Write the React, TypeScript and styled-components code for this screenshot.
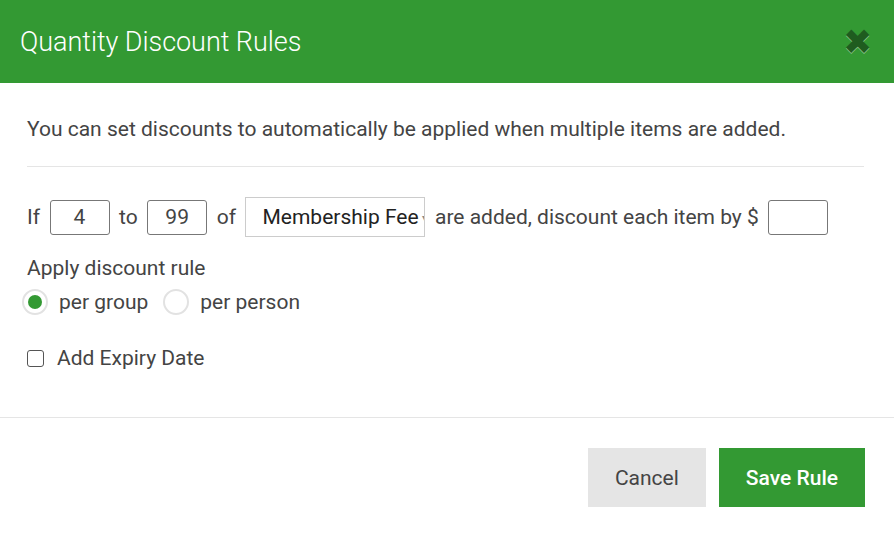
import React, { useState } from 'react';
import styled, { createGlobalStyle } from 'styled-components';

const GlobalStyle = createGlobalStyle`
  html, body {
    margin: 0;
    padding: 0;
    background: #fff;
  }
  * {
    box-sizing: border-box;
  }
`;

const App = () => {
  const [mode, setMode] = useState('group');
  const [expiry, setExpiry] = useState(false);

  return (
    <Modal>
      <GlobalStyle />
      <Header>
        <Title>Quantity Discount Rules</Title>
        <CloseButton aria-label='close'>✖</CloseButton>
      </Header>
      <Body>
        <Intro>You can set discounts to automatically be applied when multiple items are added.</Intro>
        <RuleRow>
          <Word>If</Word>
          <SmallInput defaultValue='4' />
          <Word>to</Word>
          <SmallInput defaultValue='99' />
          <Word>of</Word>
          <Select>
            <span>Membership Fee</span>
            <Caret>▾</Caret>
          </Select>
          <Word>are added, discount each item by $</Word>
          <SmallInput defaultValue='' />
        </RuleRow>
        <Label>Apply discount rule</Label>
        <RadioRow>
          <RadioOption onClick={() => setMode('group')}>
            <RadioCircle $checked={mode === 'group'} />
            <span>per group</span>
          </RadioOption>
          <RadioOption onClick={() => setMode('person')}>
            <RadioCircle $checked={mode === 'person'} />
            <span>per person</span>
          </RadioOption>
        </RadioRow>
        <CheckRow onClick={() => setExpiry(!expiry)}>
          <CheckBox $checked={expiry} />
          <span>Add Expiry Date</span>
        </CheckRow>
      </Body>
      <Footer>
        <Button>Cancel</Button>
        <Button $primary>Save Rule</Button>
      </Footer>
    </Modal>
  );
};

const Modal = styled.div`
  width: 894px;
  height: 535px;
  background: #fff;
  font-family: Roboto, 'Liberation Sans', sans-serif;
  color: #444;
  display: flex;
  flex-direction: column;
`;

const Header = styled.div`
  height: 83px;
  background: #339933;
  display: flex;
  align-items: center;
  justify-content: space-between;
  padding: 0 22px 0 20px;
`;

const Title = styled.h1`
  margin: 0;
  color: #fff;
  font-size: 27px;
  font-weight: 300;
  letter-spacing: -0.05px;
`;

const CloseButton = styled.button`
  border: none;
  background: transparent;
  padding: 0;
  color: #1f5c1f;
  font-size: 35px;
  line-height: 1;
  cursor: pointer;
  text-shadow: 0 1px 0 rgba(255, 255, 255, 0.45);
`;

const Body = styled.div`
  padding: 32px 30px 0 27px;
  display: flex;
  flex-direction: column;
  height: 335px;
  border-bottom: 1px solid #e5e5e5;
`;

const Intro = styled.p`
  margin: 0;
  font-size: 21px;
  line-height: 28px;
  padding-bottom: 23px;
  border-bottom: 1px solid #e5e5e5;
`;

const RuleRow = styled.div`
  display: flex;
  align-items: center;
  gap: 9.5px;
  margin-top: 30px;
`;

const Word = styled.span`
  font-size: 21px;
  line-height: 28px;
`;

const SmallInput = styled.input`
  width: 60px;
  height: 35px;
  border: 1px solid #777;
  border-radius: 3px;
  text-align: center;
  font-family: inherit;
  font-size: 21px;
  color: #444;
  padding: 0;
  outline: none;
`;

const Select = styled.div`
  flex: 0 0 180px;
  width: 180px;
  height: 40px;
  border: 1px solid #ccc;
  display: flex;
  align-items: center;
  padding-left: 16px;
  font-size: 21px;
  color: #222;
  overflow: hidden;
  white-space: nowrap;
`;

const Caret = styled.span`
  font-size: 10px;
  color: #888;
  margin-left: 3px;
`;

const Label = styled.div`
  margin-top: 17px;
  font-size: 21px;
  line-height: 28px;
`;

const RadioRow = styled.div`
  display: flex;
  align-items: center;
  gap: 15px;
  margin-top: 6px;
  margin-left: -5px;
`;

const RadioOption = styled.label`
  display: flex;
  align-items: center;
  gap: 11px;
  font-size: 21px;
  line-height: 28px;
  cursor: pointer;
`;

const RadioCircle = styled.span<{ $checked: boolean }>`
  width: 26px;
  height: 26px;
  border-radius: 50%;
  border: 2px solid #e2e2e2;
  background: #fff;
  display: flex;
  align-items: center;
  justify-content: center;
  &::after {
    content: '';
    width: 14px;
    height: 14px;
    border-radius: 50%;
    background: ${(p) => (p.$checked ? '#339933' : 'transparent')};
  }
`;

const CheckRow = styled.label`
  display: flex;
  align-items: center;
  gap: 13px;
  margin-top: 28px;
  font-size: 21px;
  line-height: 28px;
  cursor: pointer;
`;

const CheckBox = styled.span<{ $checked: boolean }>`
  width: 17px;
  height: 17px;
  border: 1.5px solid #555;
  border-radius: 3px;
  background: ${(p) => (p.$checked ? '#339933' : '#fff')};
`;

const Footer = styled.div`
  display: flex;
  justify-content: flex-end;
  gap: 13px;
  padding: 30px 29px 0 0;
`;

const Button = styled.button<{ $primary?: boolean }>`
  height: 59px;
  border: none;
  padding: 0 27px;
  font-family: inherit;
  font-size: 21px;
  font-weight: ${(p) => (p.$primary ? 500 : 400)};
  background: ${(p) => (p.$primary ? '#339933' : '#e5e5e5')};
  color: ${(p) => (p.$primary ? '#fff' : '#444')};
  cursor: pointer;
`;

export default App;
